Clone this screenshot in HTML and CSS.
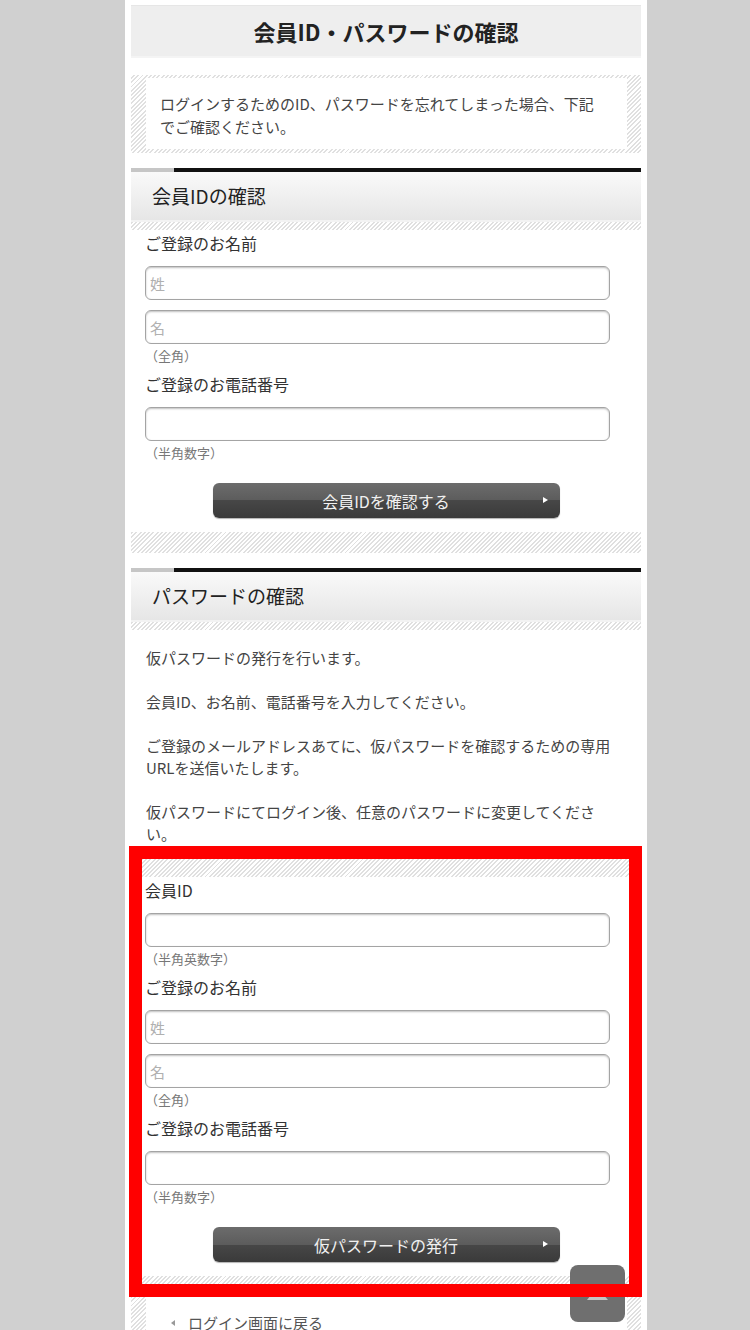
FILE: index.html
```html
<!DOCTYPE html>
<html lang="ja">
<head>
    <meta charset="UTF-8">
    <meta name="viewport" content="width=device-width, initial-scale=1.0">
    <title>会員ID・パスワードの確認</title>
    <link rel="stylesheet" href="styles.css">
</head>
<body>
    <div class="page">
        <h1 class="page-title">会員ID・パスワードの確認</h1>

        <div class="notice">
            <p>ログインするためのID、パスワードを忘れてしまった場合、下記でご確認ください。</p>
        </div>

        <div class="section">
            <h2 class="section-title">会員IDの確認</h2>
            <form class="form">
                <p class="label">ご登録のお名前</p>
                <input type="text" class="text" placeholder="姓">
                <input type="text" class="text" placeholder="名">
                <p class="note">（全角）</p>
                <p class="label">ご登録のお電話番号</p>
                <input type="tel" class="text">
                <p class="note">（半角数字）</p>
                <button type="button" class="btn">会員IDを確認する</button>
            </form>
            <div class="band"></div>
        </div>

        <div class="section">
            <h2 class="section-title">パスワードの確認</h2>
            <div class="lead">
                <p>仮パスワードの発行を行います。</p>
                <p>会員ID、お名前、電話番号を入力してください。</p>
                <p>ご登録のメールアドレスあてに、仮パスワードを確認するための専用URLを送信いたします。</p>
                <p>仮パスワードにてログイン後、任意のパスワードに変更してください。</p>
            </div>
            <div class="band band-top"></div>
            <form class="form">
                <p class="label">会員ID</p>
                <input type="text" class="text">
                <p class="note">（半角英数字）</p>
                <p class="label">ご登録のお名前</p>
                <input type="text" class="text" placeholder="姓">
                <input type="text" class="text" placeholder="名">
                <p class="note">（全角）</p>
                <p class="label">ご登録のお電話番号</p>
                <input type="tel" class="text">
                <p class="note">（半角数字）</p>
                <button type="button" class="btn">仮パスワードの発行</button>
            </form>
            <div class="band"></div>
        </div>

        <div class="back">
            <a href="#" class="back-link">ログイン画面に戻る</a>
        </div>

        <div class="highlight"></div>
    </div>

    <a href="#" class="to-top">
        <svg width="55" height="57" viewBox="0 0 55 57">
            <polygon points="27,22 38,35 17,35" fill="#c4c4c4"/>
        </svg>
    </a>
</body>
</html>
```

FILE: styles.css
```css
body {
    margin: 0;
    background-color: #d0d0d0;
    font-family: "Noto Sans CJK JP", sans-serif;
    color: #444;
}

p {
    margin: 0;
}

.page {
    position: relative;
    width: 510px;
    min-height: 1330px;
    margin-left: 125px;
    padding: 5px 6px 0;
    background-color: #fff;
}

.page-title {
    margin: 0;
    height: 50px;
    line-height: 50px;
    border-top: 1px solid #e6e6e6;
    border-bottom: 2px solid #f4f4f4;
    background-color: #eeeeee;
    text-align: center;
    font-size: 22px;
    font-weight: bold;
    color: #222;
}

/* hatched stripes used for frames and dividers */
.notice,
.band,
.back,
.section-title + .form,
.section-title + .lead {
    background: repeating-linear-gradient(-45deg, #fff 0, #fff 1.6px, #e0e0e0 1.6px, #e0e0e0 3px);
}

.notice {
    margin-top: 17px;
    padding: 3px 14px 4px 15px;
}

.notice p {
    background-color: #fff;
    padding: 14px 22px 11px 14px;
    font-size: 15px;
    line-height: 23px;
}

.section {
    margin-top: 15px;
}

.section-title {
    margin: 0;
    height: 48px;
    padding: 4px 0 0 21px;
    line-height: 48px;
    border-bottom: 2px solid #f3f3f3;
    background:
        linear-gradient(to right, #c6c6c6 43px, #111 43px) top / 100% 4px no-repeat,
        linear-gradient(#fbfbfb, #e6e6e6);
    font-size: 19px;
    font-weight: normal;
    color: #222;
}

/* the block right under a heading keeps an 8px stripe on top */
.section-title + .form,
.section-title + .lead {
    background-size: 100% 8px;
    background-repeat: no-repeat;
    border-top: 8px solid transparent;
    background-origin: border-box;
}

.form {
    display: flex;
    flex-direction: column;
    align-items: flex-start;
    padding: 3px 14px 14px;
}

.label {
    font-size: 16px;
    line-height: 20px;
    color: #333;
    margin-bottom: 13px;
}

.note + .label {
    margin-top: 10px;
}

.text {
    box-sizing: border-box;
    width: 465px;
    height: 34px;
    margin: 0;
    padding: 0 4px;
    border: 1px solid #a4a4a4;
    border-radius: 6px;
    box-shadow: inset 0 1px 2px rgba(0, 0, 0, 0.25);
    font-family: inherit;
    font-size: 15px;
    color: #333;
}

.text + .text {
    margin-top: 10px;
}

.text::placeholder {
    color: #b0b0b0;
}

.note {
    margin-top: 4px;
    font-size: 13px;
    line-height: 16px;
    color: #777;
}

.btn {
    position: relative;
    align-self: center;
    width: 347px;
    height: 35px;
    margin-top: 22px;
    border: none;
    border-radius: 6px;
    background: linear-gradient(#6c6c6c, #5c5c5c 50%, #474747 50%, #3a3a3a);
    box-shadow: 0 1px 1px rgba(0, 0, 0, 0.3);
    font-family: inherit;
    font-size: 16px;
    color: #f0f0f0;
    cursor: pointer;
}

.btn::after {
    content: "";
    position: absolute;
    right: 12px;
    top: 14px;
    border-left: 5px solid #fff;
    border-top: 3.5px solid transparent;
    border-bottom: 3.5px solid transparent;
}

.band {
    height: 21px;
}

.band-top {
    height: 24px;
}

.lead {
    padding: 17px 24px 8px 15px;
    font-size: 15px;
    line-height: 22px;
}

.lead p + p {
    margin-top: 22px;
}

.back {
    padding: 0 14px 0 15px;
}

.back-link {
    display: block;
    height: 60px;
    padding: 15px 0 0 42px;
    background-color: #fff;
    position: relative;
    font-size: 15px;
    line-height: 22px;
    color: #555;
    text-decoration: none;
}

.back-link::before {
    content: "";
    position: absolute;
    left: 25px;
    top: 23px;
    border-right: 4px solid #999;
    border-top: 3px solid transparent;
    border-bottom: 3px solid transparent;
}

.highlight {
    position: absolute;
    left: 4px;
    top: 846px;
    width: 513px;
    height: 451px;
    box-sizing: border-box;
    border: 13px solid #ff0000;
    z-index: 2;
}

.to-top {
    position: fixed;
    right: 125px;
    bottom: 8px;
    width: 55px;
    height: 57px;
    border-radius: 8px;
    background-color: #6f6f6f;
    z-index: 1;
}

.to-top svg {
    display: block;
}
```
